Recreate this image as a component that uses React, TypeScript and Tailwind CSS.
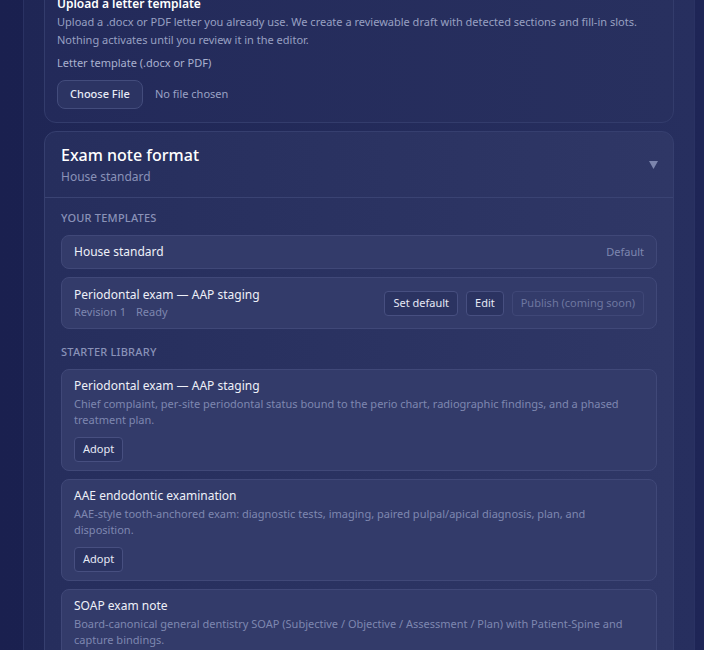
import React from 'react';

const starters = [
  {
    title: 'Periodontal exam — AAP staging',
    desc: 'Chief complaint, per-site periodontal status bound to the perio chart, radiographic findings, and a phased treatment plan.',
  },
  {
    title: 'AAE endodontic examination',
    desc: 'AAE-style tooth-anchored exam: diagnostic tests, imaging, paired pulpal/apical diagnosis, plan, and disposition.',
  },
  {
    title: 'SOAP exam note',
    desc: 'Board-canonical general dentistry SOAP (Subjective / Objective / Assessment / Plan) with Patient-Spine and capture bindings.',
  },
];

function SmallButton({ children, disabled }: { children: React.ReactNode; disabled?: boolean }) {
  return (
    <button
      disabled={disabled}
      className={`h-[25px] rounded border px-2 text-[11px] ${
        disabled
          ? 'border-[#3f4777] bg-transparent text-[#6e77a0]'
          : 'border-[#474f80] bg-[#2b3361] text-[#e6e9f5]'
      }`}
    >
      {children}
    </button>
  );
}

export default function App() {
  return (
    <div className="h-[650px] overflow-hidden bg-gradient-to-r from-[#1a204f] to-[#1e2556] font-['Noto_Sans',sans-serif]">
      <div className="ml-[23px] mr-[9px] flex h-full flex-col border-x border-[#2a3263] bg-gradient-to-r from-[#1f2655] to-[#272f5f] px-5">
        {/* letter template upload */}
        <div className="-mt-[15px] rounded-xl border border-[#333c6c] bg-gradient-to-r from-[#232a5a] to-[#28305f] px-3 pt-[10px] pb-[13px]">
          <h3 className="text-xs font-semibold leading-4 text-white">Upload a letter template</h3>
          <p className="mt-px text-[11px] leading-[18px] text-[#98a0c2]">
            Upload a .docx or PDF letter you already use. We create a reviewable draft with detected sections and
            fill-in slots. Nothing activates until you review it in the editor.
          </p>
          <label className="mt-[6px] block text-[11px] leading-4 text-[#aab1cf]">Letter template (.docx or PDF)</label>
          <div className="mt-[9px] flex items-center gap-3">
            <button className="h-[29px] rounded-lg border border-[#434c7c] bg-[#2c3463] px-3 text-[11px] font-medium text-[#e8ebf6]">
              Choose File
            </button>
            <span className="text-[11px] text-[#9aa2c4]">No file chosen</span>
          </div>
        </div>

        {/* exam note format */}
        <div className="mt-2 shrink-0 rounded-xl border border-[#363f6f] bg-gradient-to-r from-[#262e5d] to-[#2f3766]">
          <div className="flex items-center justify-between border-b border-[#3a4373] px-4 pt-3 pb-[11px]">
            <div>
              <h2 className="text-base font-medium leading-[22px] text-white">Exam note format</h2>
              <p className="mt-0.5 text-xs leading-[18px] text-[#8a92b8]">House standard</p>
            </div>
            <svg width="9" height="8" viewBox="0 0 9 8" className="mr-[-1px]">
              <path d="M0 0h9L4.5 8z" fill="#7c85ad" />
            </svg>
          </div>

          <div className="px-4 pt-3">
            <div className="text-[11px] font-medium uppercase leading-4 tracking-[0.02em] text-[#8a92b8]">
              Your templates
            </div>
            <div className="mt-[9px] flex flex-col gap-2">
              <div className="flex items-center justify-between rounded-lg border border-[#404878] bg-[#333b6a] px-3 py-[7px]">
                <span className="text-xs leading-[18px] text-[#eef0f8]">House standard</span>
                <span className="text-[11px] text-[#7e87b0]">Default</span>
              </div>
              <div className="flex items-center justify-between rounded-lg border border-[#404878] bg-[#333b6a] px-3 py-2">
                <div>
                  <div className="text-xs leading-[18px] text-[#eef0f8]">Periodontal exam — AAP staging</div>
                  <div className="flex gap-2.5 text-[11px] leading-4 text-[#7e87b0]">
                    <span>Revision 1</span>
                    <span>Ready</span>
                  </div>
                </div>
                <div className="flex gap-2">
                  <SmallButton>Set default</SmallButton>
                  <SmallButton>Edit</SmallButton>
                  <SmallButton disabled>Publish (coming soon)</SmallButton>
                </div>
              </div>
            </div>

            <div className="mt-[15px] text-[11px] font-medium uppercase leading-4 tracking-[0.02em] text-[#8a92b8]">
              Starter library
            </div>
            <div className="mt-[9px] flex flex-col gap-2 pb-4">
              {starters.map((s) => (
                <div key={s.title} className="rounded-lg border border-[#404878] bg-[#333b6a] px-3 pt-[7px] pb-2">
                  <div className="text-xs leading-[18px] text-[#eef0f8]">{s.title}</div>
                  <p className="mt-px text-[11px] leading-4 text-[#7e87b0]">{s.desc}</p>
                  <div className="mt-[7px]">
                    <SmallButton>Adopt</SmallButton>
                  </div>
                </div>
              ))}
            </div>
          </div>
        </div>
      </div>
    </div>
  );
}
